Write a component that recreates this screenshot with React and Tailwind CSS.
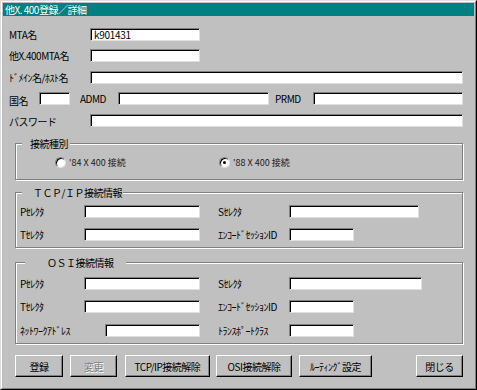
import React from 'react';

const Field = ({ className = '', value }) => (
    <div
        className={`h-[13px] shrink-0 bg-white border border-t-[#808080] border-l-[#808080] border-r-[#dfdfdf] border-b-[#dfdfdf] shadow-[inset_1px_1px_0_#000] pl-[3px] text-[10px] leading-[11px] tracking-[-0.3px] text-black ${className}`}
    >
        {value}
    </div>
);

const Label = ({ className = '', children }) => (
    <span className={`shrink-0 whitespace-nowrap text-[10px] leading-[13px] tracking-[-0.5px] ${className}`}>
        {children}
    </span>
);

const Group = ({ title, titleClass = '', className = '', children }) => (
    <div className={`relative ml-[6px] border border-[#808080] shadow-[1px_1px_0_#fff,inset_1px_1px_0_#fff] ${className}`}>
        <span className={`absolute top-[-7px] bg-[#c0c0c0] whitespace-nowrap text-[10px] leading-[13px] tracking-[-0.5px] ${titleClass}`}>
            {title}
        </span>
        {children}
    </div>
);

const Radio = ({ checked, label, className = '' }) => (
    <div className={`flex items-center gap-[3px] ${className}`}>
        <span className="flex items-center justify-center w-[11px] h-[11px] rounded-full bg-white border border-t-[#808080] border-l-[#808080] border-r-[#dfdfdf] border-b-[#dfdfdf] shadow-[inset_1px_1px_0_#000]">
            {checked && <span className="w-[3px] h-[3px] rounded-full bg-black" />}
        </span>
        <span className="text-[9px] leading-[11px] text-[#202020] whitespace-nowrap">{label}</span>
    </div>
);

const Button = ({ children, disabled, className = '' }) => (
    <button
        className={`h-[22px] shrink-0 flex items-center justify-center bg-[#c0c0c0] border border-t-white border-l-white border-r-black border-b-black shadow-[inset_-1px_-1px_0_#808080] text-[10px] tracking-[-0.5px] whitespace-nowrap ${disabled ? 'text-[#808080] [text-shadow:1px_1px_0_#fff]' : 'text-black'} ${className}`}
    >
        {children}
    </button>
);

const App = () => {
    return (
        <div className="w-[477px] h-[390px] bg-[#c0c0c0] font-['Noto_Sans_CJK_JP',sans-serif] text-black border border-t-[#dfdfdf] border-l-[#dfdfdf] border-r-black border-b-black">
            <div className="h-full border border-t-white border-l-white border-r-[#808080] border-b-[#808080] p-[1px] flex flex-col">
                {/* Title bar */}
                <div className="h-[13px] shrink-0 bg-[#008080] text-white text-[10px] leading-[13px] tracking-[-0.5px] pl-[2px] whitespace-nowrap">
                    他X. 400登録／詳細
                </div>

                <div className="flex flex-col pl-[6px] pr-[11px]">
                    {/* Basic fields */}
                    <div className="flex items-center h-[13px] mt-[12px]">
                        <Label className="w-[81px]">MTA名</Label>
                        <Field className="w-[110px]" value="k901431" />
                    </div>
                    <div className="flex items-center h-[13px] mt-[8px]">
                        <Label className="w-[81px]">他X.400MTA名</Label>
                        <Field className="w-[110px]" />
                    </div>
                    <div className="flex items-center h-[13px] mt-[9px]">
                        <Label className="w-[81px]">ﾄﾞﾒｲﾝ名/ﾎｽﾄ名</Label>
                        <Field className="flex-1" />
                    </div>
                    <div className="flex items-center h-[13px] mt-[8px]">
                        <Label className="w-[30px] pt-[4px]">国名</Label>
                        <Field className="w-[31px]" />
                        <Label className="w-[38px] ml-[10px] text-[9px]">ADMD</Label>
                        <Field className="w-[151px]" />
                        <Label className="w-[38px] ml-[6px] text-[9px]">PRMD</Label>
                        <Field className="flex-1" />
                    </div>
                    <div className="flex items-center h-[13px] mt-[9px]">
                        <Label className="w-[81px] pt-[2px]">パスワード</Label>
                        <Field className="flex-1" />
                    </div>

                    {/* 接続種別 */}
                    <Group title="接続種別" titleClass="left-[6px] w-[48px] pl-[8px]" className="mt-[16px] h-[37px]">
                        <div className="flex items-center h-full pl-[39px] pt-[1px]">
                            <Radio className="w-[164px]" label="'84 X 400 接続" />
                            <Radio checked label="'88 X 400 接続" />
                        </div>
                    </Group>

                    {/* TCP/IP */}
                    <Group title="ＴＣＰ/ＩＰ接続情報" titleClass="left-[6px] w-[101px] pl-[11px]" className="mt-[12px] pt-[12px] pb-[6px] pl-[4px]">
                        <div className="flex items-center h-[13px]">
                            <Label className="w-[64px]">Pｾﾚｸﾀ</Label>
                            <Field className="w-[116px]" />
                            <Label className="w-[71px] ml-[18px]">Sｾﾚｸﾀ</Label>
                            <Field className="w-[130px]" />
                        </div>
                        <div className="flex items-center h-[13px] mt-[10px]">
                            <Label className="w-[64px]">Tｾﾚｸﾀ</Label>
                            <Field className="w-[116px]" />
                            <Label className="w-[71px] ml-[18px]">ｴﾝｺｰﾄﾞｾｯｼｮﾝID</Label>
                            <Field className="w-[65px]" />
                        </div>
                    </Group>

                    {/* OSI */}
                    <Group title="ＯＳＩ接続情報" titleClass="left-[9px] w-[101px] pl-[22px]" className="mt-[14px] pt-[14px] pb-[6px] pl-[4px]">
                        <div className="flex items-center h-[13px]">
                            <Label className="w-[64px]">Pｾﾚｸﾀ</Label>
                            <Field className="w-[116px]" />
                            <Label className="w-[71px] ml-[18px]">Sｾﾚｸﾀ</Label>
                            <Field className="w-[133px]" />
                        </div>
                        <div className="flex items-center h-[13px] mt-[10px]">
                            <Label className="w-[64px]">Tｾﾚｸﾀ</Label>
                            <Field className="w-[116px]" />
                            <Label className="w-[71px] ml-[18px]">ｴﾝｺｰﾄﾞｾｯｼｮﾝID</Label>
                            <Field className="w-[65px]" />
                        </div>
                        <div className="flex items-center h-[13px] mt-[11px]">
                            <Label className="w-[85px]">ﾈｯﾄﾜｰｸｱﾄﾞﾚｽ</Label>
                            <Field className="w-[95px]" />
                            <Label className="w-[71px] ml-[18px]">ﾄﾗﾝｽﾎﾟｰﾄｸﾗｽ</Label>
                            <Field className="w-[65px]" />
                        </div>
                    </Group>

                    {/* Buttons */}
                    <div className="flex items-center ml-[6px] mt-[11px]">
                        <Button className="w-[48px]">登録</Button>
                        <Button disabled className="w-[47px] ml-[7px]">変更</Button>
                        <Button className="w-[85px] ml-[8px]">TCP/IP接続解除</Button>
                        <Button className="w-[76px] ml-[6px]">OSI接続解除</Button>
                        <Button className="w-[73px] ml-[7px]">ﾙｰﾃｨﾝｸﾞ設定</Button>
                        <Button className="w-[47px] ml-auto">閉じる</Button>
                    </div>
                </div>
            </div>
        </div>
    );
};

export default App;
